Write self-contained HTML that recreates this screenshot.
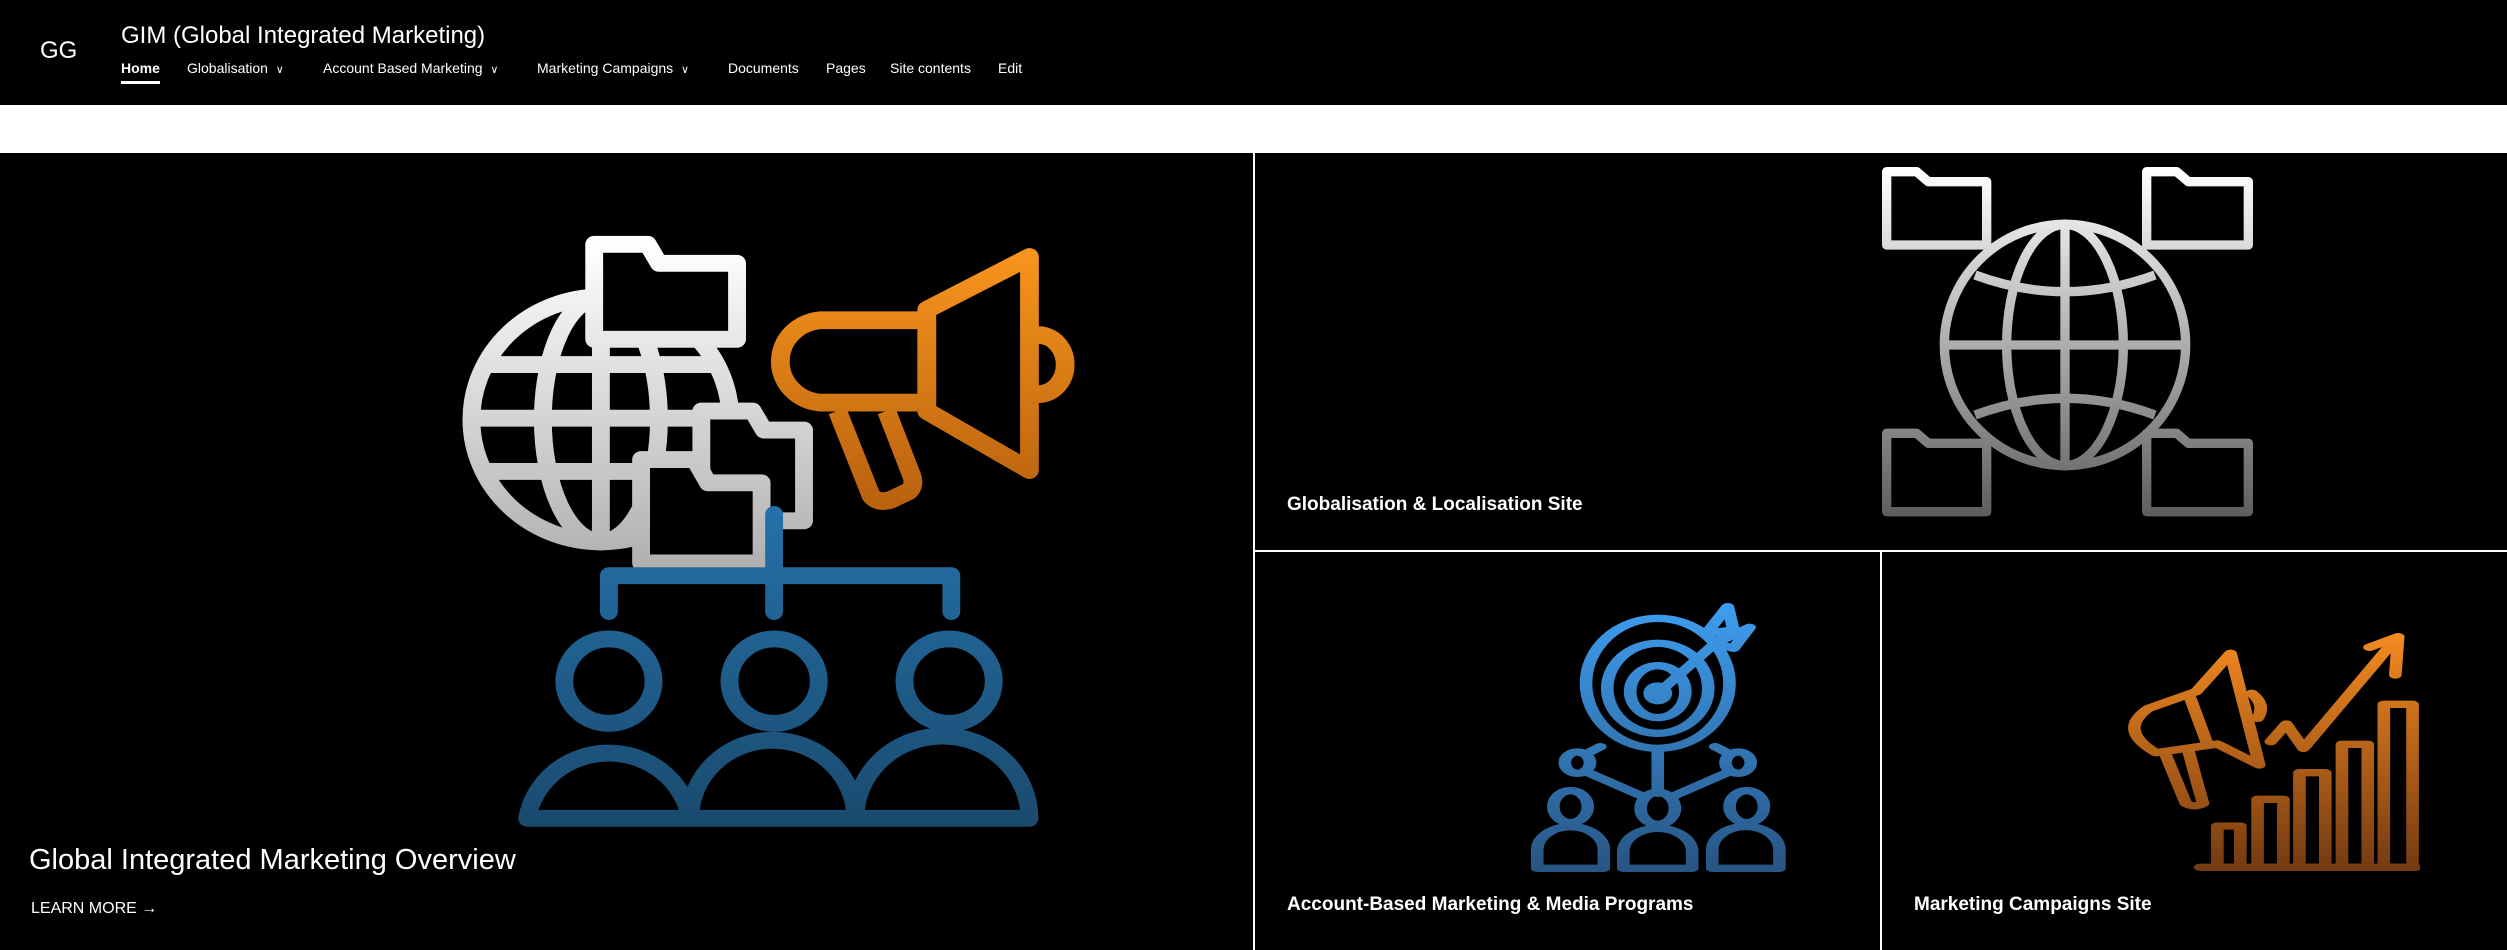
<!DOCTYPE html>
<html><head><meta charset="utf-8"><style>
*{margin:0;padding:0;box-sizing:border-box}
body{width:2507px;height:950px;background:#000;overflow:hidden;font-family:"Liberation Sans",sans-serif;color:#fff;position:relative}
.abs{position:absolute;white-space:nowrap}
.nav{font-size:14px;top:60px;position:absolute}
.lbl{font-size:19px;font-weight:700;position:absolute}
svg{position:absolute}
</style></head><body>
<div class="abs" style="left:0;top:0;width:2507px;height:105px;background:#000"></div>
<div class="abs" style="left:40px;top:37px;font-size:24px">GG</div>
<div class="abs" style="left:121px;top:22px;font-size:24px">GIM (Global Integrated Marketing)</div>
<div class="nav" style="left:121px;font-weight:700">Home</div>
<div class="abs" style="left:121px;top:81px;width:39px;height:3px;background:#fff"></div>
<div class="nav" style="left:187px">Globalisation &nbsp;<span style="font-size:11px">&#8744;</span></div>
<div class="nav" style="left:323px">Account Based Marketing &nbsp;<span style="font-size:11px">&#8744;</span></div>
<div class="nav" style="left:537px">Marketing Campaigns &nbsp;<span style="font-size:11px">&#8744;</span></div>
<div class="nav" style="left:728px">Documents</div>
<div class="nav" style="left:826px">Pages</div>
<div class="nav" style="left:890px">Site contents</div>
<div class="nav" style="left:998px">Edit</div>
<div class="abs" style="left:0;top:105px;width:2507px;height:48px;background:#fff"></div>
<div class="abs" style="left:1253px;top:153px;width:2px;height:797px;background:#fff"></div>
<div class="abs" style="left:1255px;top:550px;width:1252px;height:2px;background:#fff"></div>
<div class="abs" style="left:1880px;top:552px;width:2px;height:398px;background:#fff"></div>

<svg style="left:400px;top:200px" width="700" height="650" viewBox="0 0 1568 1540" preserveAspectRatio="none">
<defs>
<linearGradient id="gw" gradientUnits="userSpaceOnUse" x1="0" y1="100" x2="0" y2="870"><stop offset="0" stop-color="#fff"/><stop offset="1" stop-color="#b0b0b0"/></linearGradient>
<linearGradient id="go" gradientUnits="userSpaceOnUse" x1="0" y1="130" x2="0" y2="720"><stop offset="0" stop-color="#f7941d"/><stop offset="1" stop-color="#b9620f"/></linearGradient>
<linearGradient id="gb" gradientUnits="userSpaceOnUse" x1="0" y1="740" x2="0" y2="1490"><stop offset="0" stop-color="#2470a8"/><stop offset="1" stop-color="#1a4a6e"/></linearGradient>
</defs>
<g fill="none" stroke="url(#gw)" stroke-width="40" stroke-linejoin="round">
<circle cx="450" cy="520" r="290"/>
<ellipse cx="450" cy="520" rx="130" ry="290"/>
<line x1="450" y1="230" x2="450" y2="810"/>
<line x1="200" y1="390" x2="700" y2="390"/>
<line x1="160" y1="517" x2="740" y2="517"/>
<line x1="200" y1="643" x2="700" y2="643"/>
<path d="M435,330 V105 H555 L580,150 H755 V330 Z" fill="#000"/>
<path d="M675,760 V500 H790 L815,545 H905 V760 Z" fill="#000"/>
<path d="M540,860 V615 H660 L690,670 H810 V860 Z" fill="#000"/>
</g>
<g fill="none" stroke="url(#go)" stroke-width="42" stroke-linejoin="round">
<path d="M940,285 H1180 V480 H940 A98,98 0 0 1 940,285 Z"/>
<path d="M1180,260 L1410,135 V640 L1180,500 Z"/>
<path d="M1430,320 A60,70 0 0 1 1430,460"/>
<path d="M980,500 L1055,700 Q1070,720 1100,710 L1140,690 Q1155,675 1145,650 L1090,500"/>
</g>
<g fill="none" stroke="url(#gb)" stroke-width="40" stroke-linecap="round" stroke-linejoin="round">
<line x1="838" y1="745" x2="838" y2="975"/>
<path d="M468,975 V890 H1235 V975"/>
<circle cx="468" cy="1140" r="100"/>
<circle cx="838" cy="1140" r="100"/>
<circle cx="1230" cy="1140" r="100"/>
<path d="M285,1465 A185,185 0 0 1 650,1465 A185,185 0 0 1 1020,1465 A190,190 0 0 1 1410,1465 Z"/>
</g>
</svg>

<svg style="left:1850px;top:155px" width="450" height="380" viewBox="0 0 1350 1140">
<defs><linearGradient id="gg" gradientUnits="userSpaceOnUse" x1="0" y1="40" x2="0" y2="1080"><stop offset="0" stop-color="#fff"/><stop offset="1" stop-color="#5e5e5e"/></linearGradient></defs>
<g fill="none" stroke="url(#gg)" stroke-width="28" stroke-linejoin="round">
<path d="M110,270 V50 H200 L235,80 H410 V270 Z"/>
<path d="M890,270 V50 H980 L1015,80 H1195 V270 Z"/>
<path d="M110,1070 V835 H200 L235,865 H410 V1070 Z"/>
<path d="M890,1070 V835 H980 L1015,865 H1195 V1070 Z"/>
<circle cx="645" cy="570" r="362"/>
<ellipse cx="645" cy="570" rx="175" ry="362"/>
<line x1="645" y1="208" x2="645" y2="932"/>
<line x1="283" y1="570" x2="1007" y2="570"/>
<path d="M375,360 Q645,460 915,360"/>
<path d="M375,780 Q645,680 915,780"/>
</g>
</svg>

<svg style="left:1520px;top:590px" width="900" height="300" viewBox="0 0 1568 900" preserveAspectRatio="none">
<defs>
<linearGradient id="gb2" gradientUnits="userSpaceOnUse" x1="0" y1="40" x2="0" y2="840"><stop offset="0" stop-color="#3e9ef0"/><stop offset="1" stop-color="#285583"/></linearGradient>
<linearGradient id="go2" gradientUnits="userSpaceOnUse" x1="0" y1="140" x2="0" y2="840"><stop offset="0" stop-color="#f38a20"/><stop offset="1" stop-color="#743a12"/></linearGradient>
</defs>
<g fill="none" stroke="url(#gb2)" stroke-width="22" stroke-linejoin="round" stroke-linecap="round">
<ellipse cx="240" cy="280" rx="125" ry="195"/>
<ellipse cx="240" cy="295" rx="88" ry="135"/>
<ellipse cx="240" cy="305" rx="48" ry="78"/>
<ellipse cx="240" cy="310" rx="14" ry="22" fill="#3e9ef0"/>
<line x1="240" y1="310" x2="370" y2="115"/>
<path d="M325,130 L362,50 L372,120 Z M340,160 L400,112 L372,175 Z"/>
<ellipse cx="100" cy="518" rx="22" ry="32"/>
<ellipse cx="380" cy="518" rx="22" ry="32"/>
<line x1="140" y1="470" x2="115" y2="492"/>
<line x1="340" y1="470" x2="365" y2="492"/>
<line x1="115" y1="545" x2="215" y2="620"/>
<line x1="365" y1="545" x2="265" y2="620"/>
<line x1="240" y1="478" x2="240" y2="610"/>
<ellipse cx="88" cy="650" rx="30" ry="48"/>
<ellipse cx="240" cy="655" rx="30" ry="48"/>
<ellipse cx="395" cy="650" rx="30" ry="48"/>
<path d="M30,835 V780 A58,70 0 0 1 146,780 V835 Z"/>
<path d="M180,835 V785 A60,70 0 0 1 300,785 V835 Z"/>
<path d="M335,835 V780 A58,70 0 0 1 452,780 V835 Z"/>
</g>
<g fill="none" stroke="url(#go2)" stroke-width="22" stroke-linejoin="round" stroke-linecap="round">
<line x1="1185" y1="832" x2="1560" y2="832"/>
<rect x="1215" y="708" width="40" height="124"/>
<rect x="1285" y="628" width="45" height="204"/>
<rect x="1358" y="548" width="45" height="284"/>
<rect x="1432" y="463" width="45" height="369"/>
<rect x="1505" y="343" width="50" height="489"/>
<path d="M1308,455 L1335,402 L1365,475 L1525,148"/>
<path d="M1480,172 L1530,140 L1525,255"/>
<path d="M1095,355 L1178,305 L1238,190 L1288,525 L1215,462 L1108,488 Q1040,420 1095,355 Z"/>
<line x1="1168" y1="325" x2="1198" y2="465"/>
<path d="M1125,495 L1160,640 Q1175,655 1190,640 L1180,580 L1165,485"/>
<path d="M1275,310 Q1300,345 1285,385"/>
</g>
</svg>

<div class="abs" style="left:29px;top:844px;font-size:29px">Global Integrated Marketing Overview</div>
<div class="abs" style="left:31px;top:900px;font-size:16px">LEARN MORE &#8594;</div>
<div class="lbl" style="left:1287px;top:494px">Globalisation &amp; Localisation Site</div>
<div class="lbl" style="left:1287px;top:894px">Account-Based Marketing &amp; Media Programs</div>
<div class="lbl" style="left:1914px;top:894px">Marketing Campaigns Site</div>
</body></html>
